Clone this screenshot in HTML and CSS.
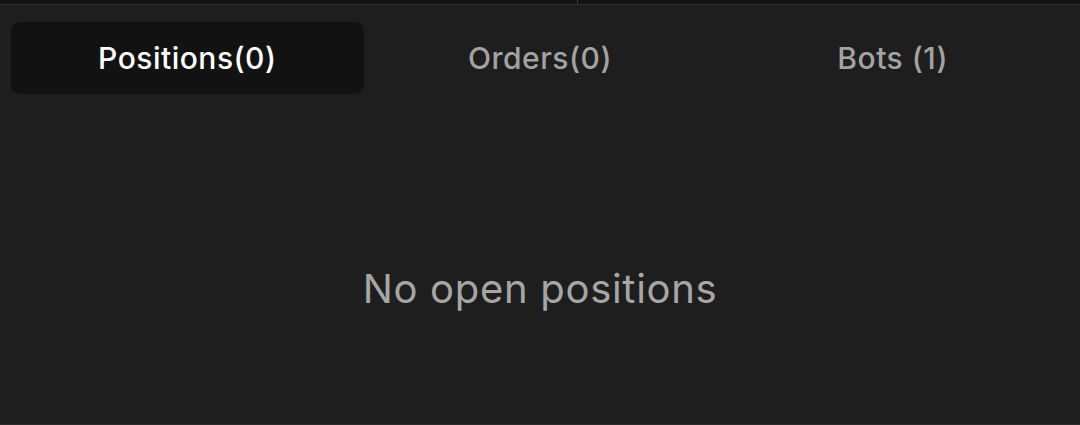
FILE: index.html
```html
<!DOCTYPE html>
<html>
<head>
<meta charset="utf-8">
<link rel="stylesheet" href="styles.css">
</head>
<body>
<div class="topbar">
  <div class="topbar-left"></div>
  <div class="topbar-right"></div>
</div>
<div class="panel">
  <div class="tabs">
    <div class="tab active">Positions(0)</div>
    <div class="tab">Orders(0)</div>
    <div class="tab">Bots (1)</div>
  </div>
  <div class="empty">No open positions</div>
</div>
</body>
</html>
```
FILE: styles.css
```css
html, body {
  margin: 0;
  padding: 0;
  background: #1e1e1e;
  font-family: Inter, "Noto Sans", sans-serif;
}
body {
  width: 1080px;
  height: 425px;
  overflow: hidden;
  display: flex;
  flex-direction: column;
}
.topbar {
  height: 4px;
  display: flex;
  background: #121212;
  border-bottom: 1px solid #333333;
}
.topbar-left {
  width: 577px;
  border-right: 1px solid #3a3a3a;
}
.topbar-right {
  flex: 1;
}
.panel {
  flex: 1;
  display: flex;
  flex-direction: column;
  border-bottom: 1px solid #2c2c2c;
}
.tabs {
  display: grid;
  grid-template-columns: 1fr 1fr 1fr;
  padding: 17px 11px 0 11px;
}
.tab {
  height: 72px;
  display: flex;
  align-items: center;
  justify-content: center;
  font-size: 30px;
  font-weight: 500;
  letter-spacing: 0.5px;
  color: #a3a3a3;
  border-radius: 9px;
}
.tab.active {
  background: #121212;
  color: #ffffff;
}
.empty {
  margin-top: 170px;
  text-align: center;
  font-size: 40px;
  letter-spacing: 0.7px;
  color: #a6a6a6;
}
```
